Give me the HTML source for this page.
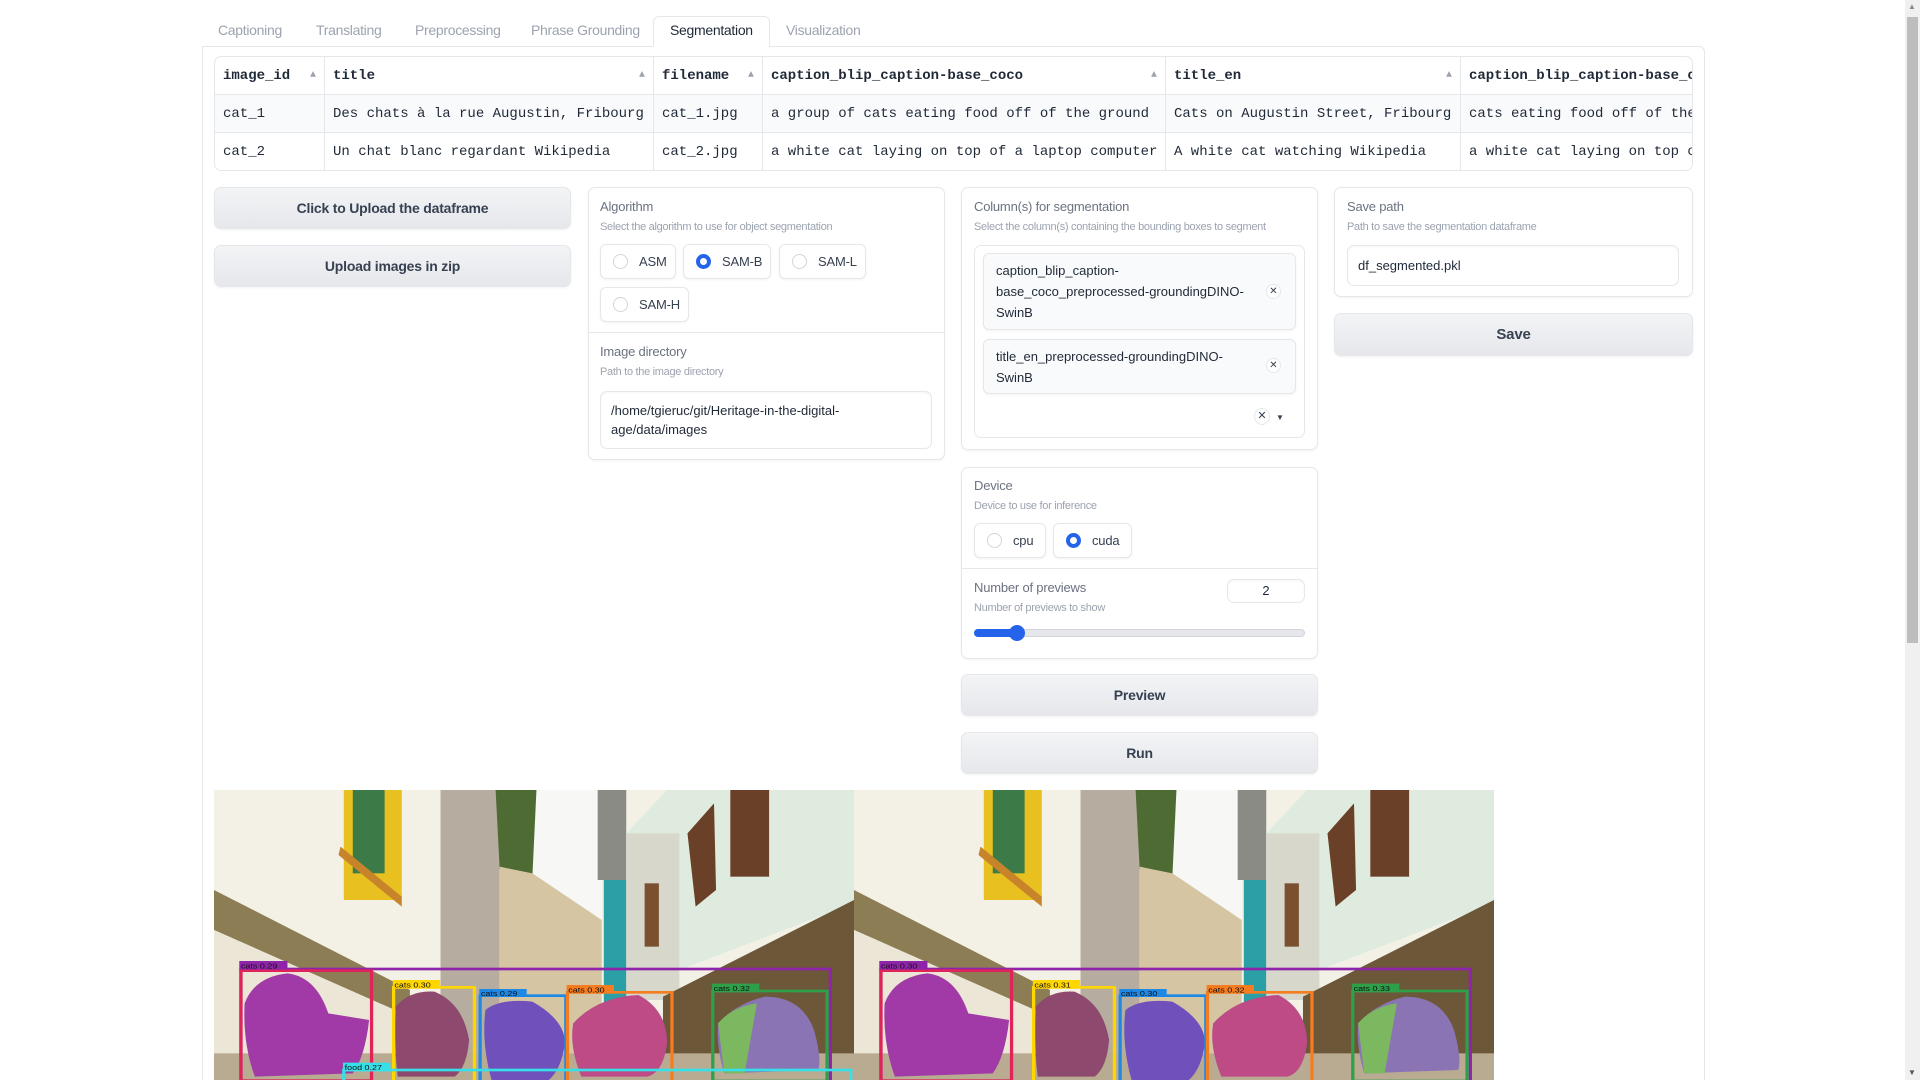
<!DOCTYPE html>
<html style="overflow:hidden;height:1080px"><head><meta charset="utf-8"><style>
*{box-sizing:border-box;margin:0;padding:0}
body{width:1920px;height:1080px;overflow:hidden;background:#fff;font-family:"Liberation Sans",sans-serif;color:#374151;position:relative}
.a{position:absolute}
.tab{position:absolute;top:22px;font-size:14px;color:#9ca3af;letter-spacing:-0.3px}
.panel{position:absolute;border:1px solid #e5e7eb;border-radius:7px;background:#fff;box-shadow:0 1px 2px rgba(0,0,0,.05)}
.lbl{position:absolute;font-size:13px;color:#6b7280;letter-spacing:-0.2px}
.info{position:absolute;font-size:11px;color:#9ca3af;letter-spacing:-0.3px}
.btn{position:absolute;border:1px solid #e5e7eb;border-radius:7px;background:linear-gradient(#f3f4f6,#e5e7eb);font-weight:bold;font-size:14px;color:#374151;display:flex;align-items:center;justify-content:center;box-shadow:0 1px 2px rgba(0,0,0,.06);letter-spacing:-0.2px}
.radio{position:absolute;border:1px solid #e5e7eb;border-radius:6px;background:#fff;font-size:13px;color:#374151;display:flex;align-items:center;padding-left:12px;box-shadow:0 1px 2px rgba(0,0,0,.05);letter-spacing:-0.2px}
.radio i{width:15px;height:15px;border-radius:50%;border:1px solid #d1d5db;margin-right:11px;display:inline-block;background:#fff}
.radio i.on{border:4px solid #2563eb;background:#fff}
table{border-collapse:collapse;font-family:"Liberation Mono",monospace;font-size:14px;color:#1f2937}
td,th{border:1px solid #e5e7eb;height:38px;padding:0 8px;text-align:left;white-space:nowrap;overflow:hidden}
th{font-weight:bold;position:relative}
th span{position:absolute;right:8px;color:#9ca3af;font-size:10px;top:13px}
tr.g td{background:#f9fafb}
.input{position:absolute;border:1px solid #e5e7eb;border-radius:7px;background:#fff;font-size:13px;color:#1f2937;box-shadow:inset 0 1px 2px rgba(0,0,0,.04)}
.chip{position:absolute;border:1px solid #e5e7eb;border-radius:6px;background:#f9fafb;font-size:13px;color:#1f2937;line-height:21px;padding:6px 0 0 12px;box-shadow:0 1px 2px rgba(0,0,0,.05)}
.x{position:absolute;width:15px;height:15px;border:1px solid #e5e7eb;border-radius:50%;font-size:10px;line-height:13px;text-align:center;color:#374151;background:#fff}
</style></head><body>

<div class="tab" style="left:218px">Captioning</div>
<div class="tab" style="left:316px">Translating</div>
<div class="tab" style="left:415px">Preprocessing</div>
<div class="tab" style="left:531px">Phrase Grounding</div>
<div class="a" style="left:653px;top:16px;width:117px;height:31px;border:1px solid #e5e7eb;border-bottom:none;border-radius:6px 6px 0 0;background:#fff;z-index:2"></div>
<div class="tab" style="left:670px;color:#1f2937;z-index:3">Segmentation</div>
<div class="tab" style="left:786px">Visualization</div>
<div class="a" style="left:202px;top:46px;width:1503px;height:1034px;border:1px solid #e5e7eb;border-bottom:none;border-radius:0 6px 0 0"></div>

<div class="a" style="left:214px;top:56px;width:1479px;height:115px;border:1px solid #e5e7eb;border-radius:7px;overflow:hidden">
<table style="margin:-1px;width:1600px;table-layout:fixed">
<colgroup><col style="width:110px"><col style="width:329px"><col style="width:109px"><col style="width:403px"><col style="width:295px"><col style="width:354px"></colgroup>
<tr><th>image_id<span>▲</span></th><th>title<span>▲</span></th><th>filename<span>▲</span></th><th>caption_blip_caption-base_coco<span>▲</span></th><th>title_en<span>▲</span></th><th>caption_blip_caption-base_coco</th></tr>
<tr class="g"><td>cat_1</td><td>Des chats à la rue Augustin, Fribourg</td><td>cat_1.jpg</td><td>a group of cats eating food off of the ground</td><td>Cats on Augustin Street, Fribourg</td><td>cats eating food off of the ground</td></tr>
<tr><td>cat_2</td><td>Un chat blanc regardant Wikipedia</td><td>cat_2.jpg</td><td>a white cat laying on top of a laptop computer</td><td>A white cat watching Wikipedia</td><td>a white cat laying on top of a laptop</td></tr>
</table></div>

<div class="btn" style="left:214px;top:187px;width:357px;height:42px">Click to Upload the dataframe</div>
<div class="btn" style="left:214px;top:245px;width:357px;height:42px">Upload images in zip</div>

<div class="panel" style="left:588px;top:187px;width:357px;height:273px"></div>
<div class="lbl" style="left:600px;top:199px">Algorithm</div>
<div class="info" style="left:600px;top:221px">Select the algorithm to use for object segmentation</div>
<div class="radio" style="left:600px;top:244px;width:76px;height:35px"><i></i>ASM</div>
<div class="radio" style="left:683px;top:244px;width:88px;height:35px"><i class="on"></i>SAM-B</div>
<div class="radio" style="left:779px;top:244px;width:87px;height:35px"><i></i>SAM-L</div>
<div class="radio" style="left:600px;top:287px;width:89px;height:35px"><i></i>SAM-H</div>
<div class="a" style="left:589px;top:332px;width:355px;height:1px;background:#e5e7eb"></div>
<div class="lbl" style="left:600px;top:344px">Image directory</div>
<div class="info" style="left:600px;top:366px">Path to the image directory</div>
<div class="input" style="left:600px;top:391px;width:332px;height:58px;padding:9px 0 0 10px;line-height:19px">/home/tgieruc/git/Heritage-in-the-digital-<br>age/data/images</div>

<div class="panel" style="left:961px;top:187px;width:357px;height:263px"></div>
<div class="lbl" style="left:974px;top:199px">Column(s) for segmentation</div>
<div class="info" style="left:974px;top:221px">Select the column(s) containing the bounding boxes to segment</div>
<div class="a" style="left:974px;top:245px;width:331px;height:193px;border:1px solid #e5e7eb;border-radius:7px"></div>
<div class="chip" style="left:983px;top:253px;width:313px;height:77px">caption_blip_caption-<br>base_coco_preprocessed-groundingDINO-<br>SwinB</div>
<div class="x" style="left:1266px;top:284px">✕</div>
<div class="chip" style="left:983px;top:339px;width:313px;height:55px">title_en_preprocessed-groundingDINO-<br>SwinB</div>
<div class="x" style="left:1266px;top:358px">✕</div>
<div class="x" style="left:1254px;top:408px;width:16px;height:17px;font-size:11px;line-height:15px">✕</div>
<div class="a" style="left:1276px;top:413px;font-size:8px;color:#374151">▼</div>

<div class="panel" style="left:961px;top:467px;width:357px;height:192px"></div>
<div class="lbl" style="left:974px;top:478px">Device</div>
<div class="info" style="left:974px;top:500px">Device to use for inference</div>
<div class="radio" style="left:974px;top:523px;width:72px;height:35px"><i></i>cpu</div>
<div class="radio" style="left:1053px;top:523px;width:79px;height:35px"><i class="on"></i>cuda</div>
<div class="a" style="left:962px;top:568px;width:355px;height:1px;background:#e5e7eb"></div>
<div class="lbl" style="left:974px;top:580px">Number of previews</div>
<div class="info" style="left:974px;top:602px">Number of previews to show</div>
<div class="input" style="left:1227px;top:579px;width:78px;height:24px;text-align:center;line-height:22px">2</div>
<div class="a" style="left:974px;top:629px;width:331px;height:8px;border-radius:4px;background:#e5e7eb;border:1px solid #d1d5db"></div>
<div class="a" style="left:974px;top:629px;width:44px;height:8px;border-radius:4px;background:#2563eb"></div>
<div class="a" style="left:1009px;top:625px;width:16px;height:16px;border-radius:50%;background:#2563eb"></div>

<div class="btn" style="left:961px;top:674px;width:357px;height:42px">Preview</div>
<div class="btn" style="left:961px;top:732px;width:357px;height:42px">Run</div>

<div class="panel" style="left:1334px;top:187px;width:359px;height:110px"></div>
<div class="lbl" style="left:1347px;top:199px">Save path</div>
<div class="info" style="left:1347px;top:221px">Path to save the segmentation dataframe</div>
<div class="input" style="left:1347px;top:245px;width:332px;height:41px;padding:12px 0 0 10px">df_segmented.pkl</div>
<div class="btn" style="left:1334px;top:313px;width:359px;height:43px;font-size:15px">Save</div>

<svg class="a" style="left:214px;top:790px" width="1280" height="290" viewBox="0 0 3136 870" preserveAspectRatio="none">
<defs>
<g id="scene">
<rect width="1568" height="870" fill="#f3f0e6"/>
<polygon points="0,300 480,600 480,680 0,420" fill="#8c7d55"/>
<polygon points="0,420 480,680 555,700 555,870 0,870" fill="#ece6d6"/>
<rect x="318" y="0" width="142" height="330" fill="#e8c020"/>
<rect x="340" y="0" width="78" height="250" fill="#3c7a48"/>
<polygon points="310,170 460,320 460,350 305,195" fill="#c8842a"/>
<rect x="555" y="0" width="145" height="870" fill="#b6ada0"/>
<rect x="700" y="0" width="250" height="870" fill="#f7f7f5"/>
<polygon points="690,0 790,0 780,260 700,240" fill="#4d6b33"/>
<polygon points="700,230 780,250 950,390 950,870 700,870" fill="#d6c5a2"/>
<rect x="940" y="0" width="70" height="270" fill="#8b8b86"/>
<rect x="955" y="270" width="60" height="400" fill="#2aa0a6"/>
<polygon points="1010,130 1110,0 1568,0 1568,340 1140,540 1010,600" fill="#e0ebdf"/>
<rect x="1010" y="130" width="130" height="500" fill="#d8d7cc"/>
<polygon points="1160,130 1225,40 1230,300 1180,350" fill="#6a4128"/>
<rect x="1265" y="0" width="95" height="260" fill="#6a4128"/>
<rect x="1055" y="280" width="35" height="190" fill="#7a5030"/>
<polygon points="1100,620 1568,330 1568,870 1100,870" fill="#6c5838"/>
<rect x="0" y="790" width="1568" height="80" fill="#b9aa92"/>
<path d="M75,640 Q100,560 180,550 Q250,560 280,670 L380,690 Q370,800 340,850 L100,860 Q70,760 75,640Z" fill="#a13aa6"/>
<path d="M445,650 Q480,600 540,605 Q610,640 625,750 Q620,830 590,860 L450,860 Q440,760 445,650Z" fill="#8e4a6e"/>
<path d="M665,660 Q700,625 780,635 Q860,690 860,760 Q850,840 820,870 L680,870 Q655,760 665,660Z" fill="#7050bb"/>
<path d="M880,700 Q940,620 1040,615 Q1110,660 1110,760 Q1100,850 1060,860 L900,860 Q870,770 880,700Z" fill="#be4a86"/>
<path d="M1235,700 Q1280,640 1350,620 Q1440,620 1470,720 Q1490,810 1480,840 L1250,850 Q1230,770 1235,700Z" fill="#8a74b4"/>
<path d="M1235,700 Q1270,650 1330,640 L1300,850 L1250,850Z" fill="#7cb860"/>
<g fill="none" stroke-width="8">
<rect x="66" y="537" width="1444" height="340" stroke="#8e24aa"/>
<rect x="66" y="542" width="320" height="330" stroke="#e0245a"/>
<rect x="440" y="592" width="198" height="290" stroke="#ffd600"/>
<rect x="652" y="617" width="210" height="260" stroke="#1e88e5"/>
<rect x="866" y="607" width="256" height="270" stroke="#f57c1f"/>
<rect x="1222" y="603" width="280" height="270" stroke="#2ea04a"/>
</g>
<rect x="62" y="513" width="118" height="26" fill="#8e24aa"/>
<rect x="438" y="570" width="116" height="26" fill="#ffd600"/>
<rect x="650" y="597" width="116" height="24" fill="#1e88e5"/>
<rect x="864" y="585" width="116" height="26" fill="#f57c1f"/>
<rect x="1220" y="581" width="116" height="26" fill="#2ea04a"/>
</g>
</defs>
<use href="#scene"/>
<use href="#scene" x="1568"/>
<rect x="318" y="840" width="1242" height="40" fill="none" stroke="#36e0e8" stroke-width="8"/>
<rect x="316" y="818" width="116" height="26" fill="#36e0e8"/>
<g font-family="Liberation Sans" font-size="22" fill="#111">
<text x="66" y="535">cats 0.29</text>
<text x="442" y="592">cats 0.30</text>
<text x="654" y="618">cats 0.29</text>
<text x="868" y="607">cats 0.30</text>
<text x="1224" y="603">cats 0.32</text>
<text x="320" y="840">food 0.27</text>
<text x="1634" y="535">cats 0.30</text>
<text x="2010" y="592">cats 0.31</text>
<text x="2222" y="618">cats 0.30</text>
<text x="2436" y="607">cats 0.32</text>
<text x="2792" y="603">cats 0.33</text>
</g>
</svg>

<div class="a" style="left:1905px;top:0;width:15px;height:1080px;background:#f0f0f0"></div>
<div class="a" style="left:1907px;top:17px;width:11px;height:626px;background:#bdbdbd"></div>
<div class="a" style="left:1908px;top:2px;font-size:8px;color:#888">▲</div>
<div class="a" style="left:1908px;top:1068px;font-size:8px;color:#555">▼</div>
</body></html>
